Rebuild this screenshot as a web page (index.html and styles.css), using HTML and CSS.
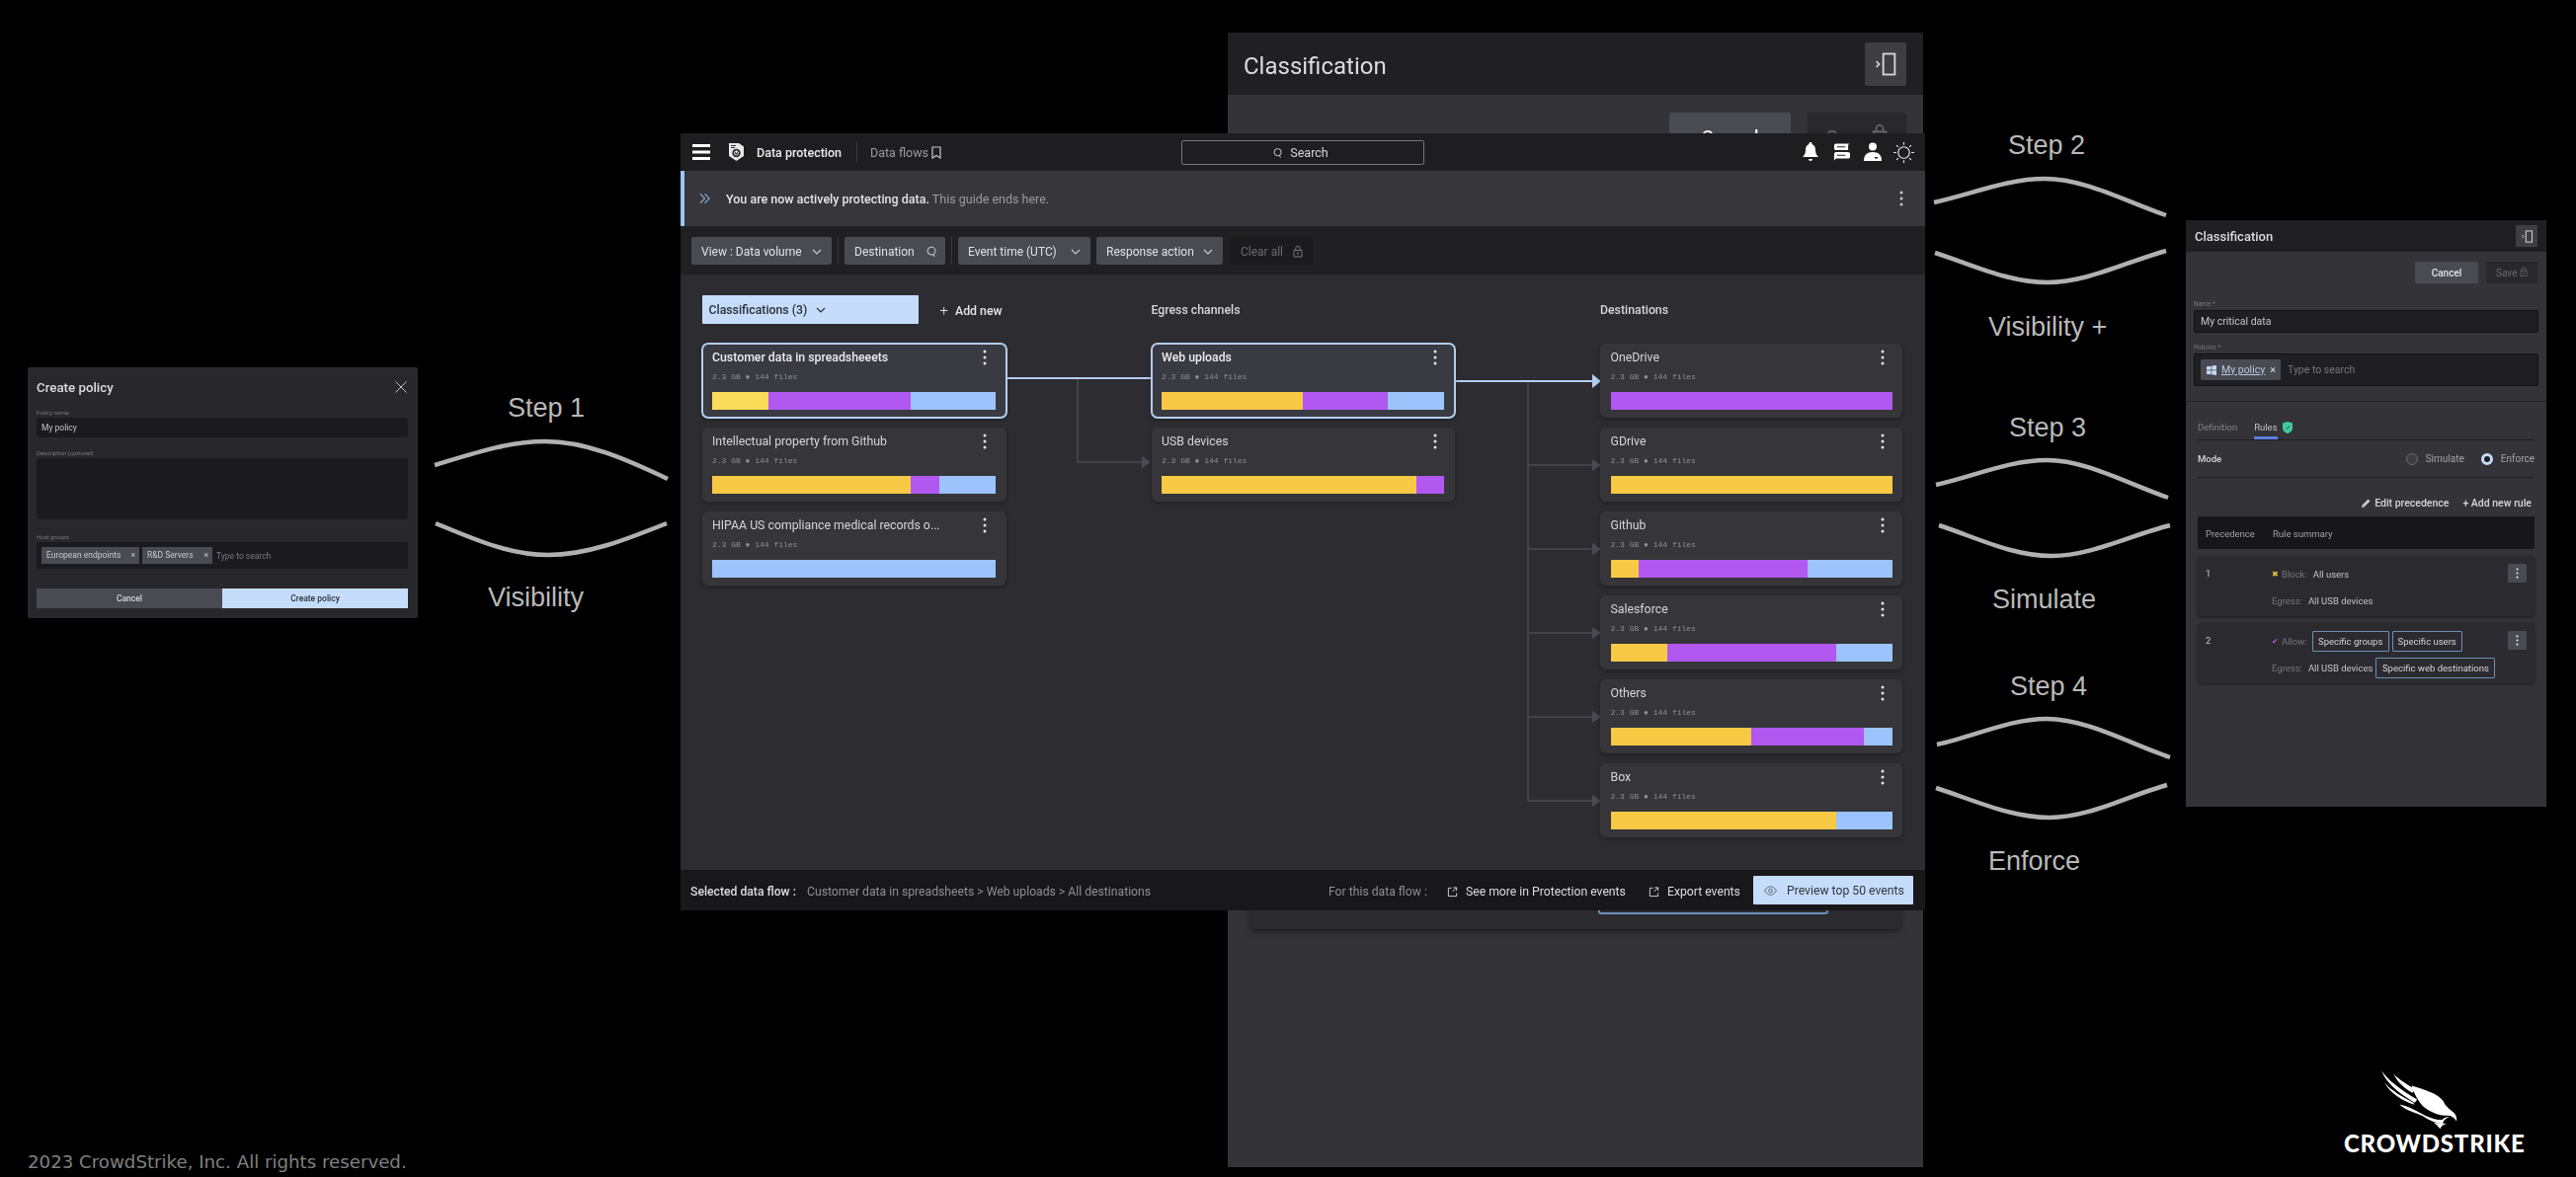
FILE: index.html
```html
<!DOCTYPE html>
<html lang="en">
<head>
<meta charset="utf-8">
<title>CrowdStrike data protection flow</title>
<link rel="stylesheet" href="styles.css">
</head>
<body>
<svg class="defs" width="0" height="0" aria-hidden="true">
  <symbol id="kebab" viewBox="0 0 4 16"><circle cx="2" cy="2" r="1.5"/><circle cx="2" cy="8" r="1.5"/><circle cx="2" cy="14" r="1.5"/></symbol>
  <symbol id="chev" viewBox="0 0 10 6"><path d="M1 1l4 4 4-4" fill="none" stroke="currentColor" stroke-width="1.2"/></symbol>
  <symbol id="lock" viewBox="0 0 10 12"><path d="M1 5h8v6.5H1zM2.8 5V3a2.2 2.2 0 0 1 4.4 0v2" fill="none" stroke="currentColor" stroke-width="1"/><circle cx="5" cy="8" r="1" fill="currentColor"/></symbol>
  <symbol id="collapse" viewBox="0 0 24 24"><rect x="10" y="3" width="10" height="18" fill="none" stroke="currentColor" stroke-width="1.6"/><path d="M4 9.500l2.500 2.500L4 14.500" fill="none" stroke="currentColor" stroke-width="1.400"/></symbol>
  <symbol id="ext" viewBox="0 0 12 12"><path d="M5 2H1.500v9h9V7.500M7 1.500h3.500V5M10.500 1.500L6 6" fill="none" stroke="currentColor" stroke-width="1"/></symbol>
  <symbol id="glass" viewBox="0 0 12 13"><circle cx="5.500" cy="5.500" r="4.300" fill="none" stroke="currentColor" stroke-width="1.100"/><path d="M7.500 9.500l1.500 2.500" stroke="currentColor" stroke-width="1.100"/></symbol>
</svg>

<main class="canvas">
  <svg class="waves" viewBox="0 0 2608 1192" aria-hidden="true">
    <path d="M440 471C480 459 515 447 552 447C592 447 632 464 676 485"/>
    <path d="M441 530C480 546 515 562 555 562C595 562 635 546 675 530"/>
    <path d="M1958 205C1995 197 2032 181 2070 181C2110 181 2150 203 2193 218"/>
    <path d="M1959 256C1997 268 2033 286 2073 286C2113 286 2153 265 2193 254"/>
    <path d="M1960 491C1997 483 2034 466 2072 466C2112 466 2152 489 2195 504"/>
    <path d="M1963 532C2000 544 2037 563 2077 563C2117 563 2157 542 2197 532"/>
    <path d="M1961 754C1998 746 2035 728 2072 728C2112 728 2154 752 2197 767"/>
    <path d="M1960 798C1998 810 2035 828 2075 828C2115 828 2154 806 2194 795"/>
  </svg>
  <div class="lbl lbl-s1">Step 1</div>
  <div class="lbl lbl-v1">Visibility</div>
  <div class="lbl lbl-s2">Step 2</div>
  <div class="lbl lbl-v2">Visibility +</div>
  <div class="lbl lbl-s3">Step 3</div>
  <div class="lbl lbl-sim">Simulate</div>
  <div class="lbl lbl-s4">Step 4</div>
  <div class="lbl lbl-enf">Enforce</div>

  <section class="dialog">
    <div class="dialog-head"><h2>Create policy</h2>
      <svg class="dialog-x" viewBox="0 0 12 12"><path d="M.5.500l11 11M11.500.500l-11 11" stroke="currentColor" fill="none"/></svg></div>
    <label class="d-label">Policy name</label>
    <div class="d-input d-name">My policy</div>
    <label class="d-label d-gap">Description (optional)</label>
    <div class="d-input d-area"></div>
    <label class="d-label d-gap2">Host groups</label>
    <div class="d-input d-hosts">
      <span class="d-chip d-chip-a">European endpoints <i>×</i></span>
      <span class="d-chip d-chip-b">R&amp;D Servers <i>×</i></span>
      <span class="d-ph">Type to search</span>
    </div>
    <div class="d-actions"><span class="d-btn d-cancel">Cancel</span><span class="d-btn d-create">Create policy</span></div>
  </section>

  <section class="back">
    <header class="back-head"><h2>Classification</h2><span class="back-collapse"><svg><use href="#collapse"/></svg></span></header>
    <div class="back-actions"><span class="back-cancel">Cancel</span><span class="back-save">Save <svg><use href="#lock"/></svg></span></div>
    <div class="back-card"><span class="back-tag"></span></div>
  </section>

  <section class="app">
    <header class="topbar">
      <div class="top-left">
        <svg class="burger" viewBox="0 0 18 16"><path d="M0 1.500h18M0 8h18M0 14.500h18" stroke="#fff" stroke-width="3"/></svg>
        <svg class="shield" viewBox="0 0 17 20"><path d="M1 1h10l5 3.500V14l-7.500 5L1 14z" fill="#e8e8ea"/><path d="M3 3.500h5M3 5.500h4" stroke="#333" stroke-width="1"/><circle cx="8.500" cy="11" r="4.200" fill="#2a2a2e"/><circle cx="8.500" cy="11" r="2" fill="none" stroke="#e8e8ea"/><path d="M8.500 8.500v2.500" stroke="#e8e8ea"/></svg>
        <span class="app-name">Data protection</span>
        <span class="top-sep"></span>
        <span class="crumb">Data flows</span>
        <svg class="bookmark" viewBox="0 0 10 13"><path d="M1 1h8v11L5 9.500 1 12z" fill="none" stroke="#c8c8cc" stroke-width="1.200"/></svg>
      </div>
      <div class="search"><svg><use href="#glass"/></svg>Search</div>
      <div class="top-right">
        <svg class="ti ti-bell" viewBox="0 0 16 20"><path d="M8 0a1.500 1.500 0 0 1 1.500 2C12 3 13 5 13 8c0 3 1 5 3 7H0c2-2 3-4 3-7 0-3 1-5 3.500-6A1.500 1.500 0 0 1 8 0z" fill="#fff"/><path d="M6 17h4a2 2 0 0 1-4 0z" fill="#fff"/></svg>
        <svg class="ti ti-chat" viewBox="0 0 18 20"><path d="M3 1h14l-1 1.500V8H3a2 2 0 0 1-2-2V3a2 2 0 0 1 2-2zM3 10h13a2 2 0 0 1 2 2v3a2 2 0 0 1-2 2H3l-2 2V12a2 2 0 0 1 2-2z" fill="#fff"/><path d="M4 4.500h9M4 13.500h9" stroke="#1e1e20" stroke-width="1.200"/></svg>
        <svg class="ti ti-user" viewBox="0 0 18 20"><circle cx="9" cy="4.500" r="4" fill="#fff"/><path d="M0 19c0-5 2-9 9-9s9 4 9 9z" fill="#fff"/><rect x="11" y="15" width="3" height="1.500" fill="#1e1e20"/></svg>
        <svg class="ti ti-sun" viewBox="0 0 22 22"><circle cx="11" cy="11" r="6" fill="none" stroke="#e8e8ea" stroke-width="1.200"/><path d="M11 0v3M11 19v3M0 11h3M19 11h3M3.200 3.200l2 2M16.800 16.800l2 2M3.200 18.800l2-2M16.800 5.200l2-2" stroke="#e8e8ea" stroke-width="1.200"/></svg>
      </div>
    </header>

    <div class="banner">
      <svg class="guide" viewBox="0 0 12 12"><path d="M1 1l5 5-5 5M6 1l5 5-5 5" fill="none" stroke="#9cc3fb" stroke-width="1.100"/></svg>
      <span class="banner-text"><b>You are now actively protecting data.</b> This guide ends here.</span>
      <svg class="kebab banner-kebab"><use href="#kebab"/></svg>
    </div>

    <div class="filters">
      <span class="fbtn f-view">View : Data volume <svg class="chev"><use href="#chev"/></svg></span>
      <span class="fsep"></span>
      <span class="fbtn f-dest">Destination <svg class="glass"><use href="#glass"/></svg></span>
      <span class="fsep"></span>
      <span class="fbtn f-time">Event time (UTC) <svg class="chev"><use href="#chev"/></svg></span>
      <span class="fbtn f-resp">Response action <svg class="chev"><use href="#chev"/></svg></span>
      <span class="fbtn f-clear">Clear all <svg class="lock"><use href="#lock"/></svg></span>
    </div>

    <div class="graph">
      <svg class="wires" viewBox="689 278 1260 603" aria-hidden="true">
        <path class="w-dim" d="M1091 383V468H1156M1547 386V811M1547 471H1612M1547 556H1612M1547 641H1612M1547 726H1612M1547 811H1612"/>
        <path class="a-dim" d="M1156 462l9 6-9 6zM1612 465l9 6-9 6zM1612 550l9 6-9 6zM1612 635l9 6-9 6zM1612 720l9 6-9 6zM1612 805l9 6-9 6z"/>
        <path class="w-on" d="M1018 383H1165M1473 386H1612"/>
        <path class="a-on" d="M1612 379l9 7-9 7z"/>
      </svg>
      <div class="col col-a">
        <div class="col-head"><span class="class-btn">Classifications (3) <svg class="chev"><use href="#chev"/></svg></span><span class="add-new"><i>+</i> Add new</span></div>
        <article class="card sel">
          <div class="card-top"><h3>Customer data in spreadsheeets</h3><svg class="kebab"><use href="#kebab"/></svg></div>
          <p class="meta">2.3 GB ● 144 files</p>
          <div class="bar"><span class="seg y y-light" style="width:20%"></span><span class="seg p" style="width:50%"></span><span class="seg b" style="width:30%"></span></div>
        </article>
        <article class="card">
          <div class="card-top"><h3>Intellectual property from Github</h3><svg class="kebab"><use href="#kebab"/></svg></div>
          <p class="meta">2.3 GB ● 144 files</p>
          <div class="bar"><span class="seg y" style="width:70%"></span><span class="seg p" style="width:10%"></span><span class="seg b" style="width:20%"></span></div>
        </article>
        <article class="card">
          <div class="card-top"><h3>HIPAA US compliance medical records o...</h3><svg class="kebab"><use href="#kebab"/></svg></div>
          <p class="meta">2.3 GB ● 144 files</p>
          <div class="bar"><span class="seg b" style="width:100%"></span></div>
        </article>
      </div>
      <div class="col col-b">
        <div class="col-head"><span class="col-title">Egress channels</span></div>
        <article class="card sel">
          <div class="card-top"><h3>Web uploads</h3><svg class="kebab"><use href="#kebab"/></svg></div>
          <p class="meta">2.3 GB ● 144 files</p>
          <div class="bar"><span class="seg y" style="width:50%"></span><span class="seg p" style="width:30%"></span><span class="seg b" style="width:20%"></span></div>
        </article>
        <article class="card">
          <div class="card-top"><h3>USB devices</h3><svg class="kebab"><use href="#kebab"/></svg></div>
          <p class="meta">2.3 GB ● 144 files</p>
          <div class="bar"><span class="seg y" style="width:90%"></span><span class="seg p" style="width:10%"></span></div>
        </article>
      </div>
      <div class="col col-c">
        <div class="col-head"><span class="col-title">Destinations</span></div>
        <article class="card">
          <div class="card-top"><h3>OneDrive</h3><svg class="kebab"><use href="#kebab"/></svg></div>
          <p class="meta">2.3 GB ● 144 files</p>
          <div class="bar"><span class="seg p" style="width:100%"></span></div>
        </article>
        <article class="card">
          <div class="card-top"><h3>GDrive</h3><svg class="kebab"><use href="#kebab"/></svg></div>
          <p class="meta">2.3 GB ● 144 files</p>
          <div class="bar"><span class="seg y" style="width:100%"></span></div>
        </article>
        <article class="card">
          <div class="card-top"><h3>Github</h3><svg class="kebab"><use href="#kebab"/></svg></div>
          <p class="meta">2.3 GB ● 144 files</p>
          <div class="bar"><span class="seg y" style="width:10%"></span><span class="seg p" style="width:60%"></span><span class="seg b" style="width:30%"></span></div>
        </article>
        <article class="card">
          <div class="card-top"><h3>Salesforce</h3><svg class="kebab"><use href="#kebab"/></svg></div>
          <p class="meta">2.3 GB ● 144 files</p>
          <div class="bar"><span class="seg y" style="width:20%"></span><span class="seg p" style="width:60%"></span><span class="seg b" style="width:20%"></span></div>
        </article>
        <article class="card">
          <div class="card-top"><h3>Others</h3><svg class="kebab"><use href="#kebab"/></svg></div>
          <p class="meta">2.3 GB ● 144 files</p>
          <div class="bar"><span class="seg y" style="width:50%"></span><span class="seg p" style="width:40%"></span><span class="seg b" style="width:10%"></span></div>
        </article>
        <article class="card">
          <div class="card-top"><h3>Box</h3><svg class="kebab"><use href="#kebab"/></svg></div>
          <p class="meta">2.3 GB ● 144 files</p>
          <div class="bar"><span class="seg y" style="width:80%"></span><span class="seg b" style="width:20%"></span></div>
        </article>
      </div>
    </div>

    <footer class="foot">
      <b class="foot-sel">Selected data flow :</b>
      <span class="foot-path">Customer data in spreadsheets &gt; Web uploads &gt; All destinations</span>
      <span class="foot-for">For this data flow :</span>
      <span class="foot-link l-more"><svg><use href="#ext"/></svg>See more in Protection events</span>
      <span class="foot-link l-export"><svg><use href="#ext"/></svg>Export events</span>
      <span class="preview"><svg viewBox="0 0 14 10"><path d="M.5 5C3 1.500 5 .500 7 .500s4 1 6.500 4.500C11 8.500 9 9.500 7 9.500S3 8.500.5 5z" fill="none" stroke="#55606e"/><circle cx="7" cy="5" r="2" fill="none" stroke="#55606e"/></svg>Preview top 50 events</span>
    </footer>
  </section>

  <section class="rail">
    <header class="rail-head"><h2>Classification</h2><span class="rail-collapse"><svg><use href="#collapse"/></svg></span></header>
    <div class="rail-actions"><span class="r-cancel">Cancel</span><span class="r-save">Save <svg><use href="#lock"/></svg></span></div>
    <div class="rail-form">
      <label class="r-label r-label-a">Name *</label>
      <div class="r-input r-name">My critical data</div>
      <label class="r-label r-label-b">Policies *</label>
      <div class="r-input r-policies">
        <span class="r-chip"><svg viewBox="0 0 11 11"><path d="M0 1.500l5-.800v4.300H0zM5.800.600L11 0v5H5.800zM0 5.800h5v4.400l-5-.700zM5.800 5.800H11V11l-5.200-.700z" fill="#c5dcfb"/></svg><u>My policy</u><i>×</i></span>
        <span class="r-ph">Type to search</span>
      </div>
    </div>
    <div class="rail-body">
      <nav class="tabs"><span class="tab">Definition</span><span class="tab tab-on">Rules</span>
        <svg class="tab-shield" viewBox="0 0 10 12"><path d="M0 1.500L5 0l5 1.500V7c0 2.500-2.500 4-5 5-2.500-1-5-2.500-5-5z" fill="#41c99a"/><path d="M3 6l1.500 1.500L7 4.500" stroke="#1f6b52" fill="none"/></svg></nav>
      <div class="mode"><b>Mode</b>
        <span class="radio"></span><span class="mode-opt m-sim">Simulate</span>
        <span class="radio radio-on"></span><span class="mode-opt">Enforce</span></div>
      <div class="rule-tools">
        <span class="tool"><svg viewBox="0 0 9 9"><path d="M0 9l.600-2.500L6.500.500l2 2-6 6z" fill="#c8c8cc"/></svg>Edit precedence</span>
        <span class="tool tool-add">+ Add new rule</span>
      </div>
      <div class="r-thead"><span class="th-a">Precedence</span><span>Rule summary</span></div>
      <article class="rule">
        <span class="rule-n">1</span>
        <div class="rule-lines">
          <div class="rule-line"><span class="mark mark-x">✖</span><span class="dim">Block:</span><span>All users</span></div>
          <div class="rule-line rule-line2"><span class="dim">Egress:</span><span>All USB devices</span></div>
        </div>
        <span class="rule-menu"><svg class="kebab"><use href="#kebab"/></svg></span>
      </article>
      <article class="rule">
        <span class="rule-n">2</span>
        <div class="rule-lines">
          <div class="rule-line"><span class="mark mark-ok">✔</span><span class="dim">Allow:</span><span class="tag tag-g">Specific groups</span><span class="tag tag-u">Specific users</span></div>
          <div class="rule-line rule-line2"><span class="dim">Egress:</span><span>All USB devices</span><span class="tag tag-w">Specific web destinations</span></div>
        </div>
        <span class="rule-menu"><svg class="kebab"><use href="#kebab"/></svg></span>
      </article>
    </div>
  </section>

  <p class="copy">2023 CrowdStrike, Inc. All rights reserved.</p>

  <div class="brand">
    <svg class="bird" viewBox="205 35 245 190" aria-hidden="true">
      <path d="M213 42C232 70 270 100 322 130C318 136 316 138 314 140C280 118 232 90 213 42Z"/>
      <path d="M250 52C270 72 300 88 318 100C312 104 310 106 308 110C285 96 262 78 250 52Z"/>
      <path d="M222 78C245 105 278 122 310 140L314 146C278 134 240 112 222 78Z"/>
      <path d="M305 88C345 100 385 112 402 135C408 150 422 160 436 172C442 180 444 188 442 196C436 184 424 178 410 179C392 180 368 172 346 156C326 140 314 114 305 88Z"/>
      <path d="M268 145C295 150 320 165 345 178C365 188 380 192 398 192C404 186 412 182 420 184C406 188 402 196 400 204C385 204 360 196 338 180C318 170 290 165 268 145Z"/>
      <path d="M372 200C382 202 398 202 412 204C402 206 396 210 392 220C388 214 380 206 372 200Z"/>
    </svg>
    <span class="brand-name">CROWDSTRIKE</span>
  </div>
</main>
</body>
</html>
```

FILE: styles.css
```css
* { box-sizing: border-box; }
html, body { margin: 0; padding: 0; background: #000; }
body { font-family: Roboto, "Liberation Sans", sans-serif; color: #e4e4e7; }
h2, h3, p { margin: 0; font-weight: 400; }
i { font-style: normal; }
.defs { position: absolute; }

.canvas { position: relative; width: 2608px; height: 1192px; overflow: hidden; background: #000; }

/* connectors and step captions */
.waves { position: absolute; left: 0; top: 0; width: 2608px; height: 1192px; }
.waves path { fill: none; stroke: #b0b0b0; stroke-width: 4.5; }
.lbl { position: absolute; font: 27px/32px "Liberation Sans", Arial, sans-serif; color: #b9b9b9; white-space: nowrap; }
.lbl-s1 { left: 514px; top: 397px; }
.lbl-v1 { left: 494px; top: 589px; }
.lbl-s2 { left: 2033px; top: 131px; }
.lbl-v2 { left: 2013px; top: 315px; }
.lbl-s3 { left: 2034px; top: 417px; }
.lbl-sim { left: 2017px; top: 591px; }
.lbl-s4 { left: 2035px; top: 679px; }
.lbl-enf { left: 2013px; top: 856px; }

/* step 1 dialog */
.dialog { position: absolute; left: 28px; top: 372px; width: 395px; height: 254px; padding: 0 10px 0 9px; background: #28282c; border-radius: 2px; display: flex; flex-direction: column; filter: blur(.5px); }
.dialog-head { display: flex; align-items: center; justify-content: space-between; height: 38px; padding-top: 2px; padding-right: 1px; }
.dialog-head h2 { font-size: 13.300px; font-weight: 500; color: #dcdce0; }
.dialog-x { width: 12px; height: 12px; color: #c4c4c8; }
.d-label { display: block; height: 9px; margin-top: 3px; font-size: 6px; line-height: 9px; color: #77777c; }
.d-input { background: #1b1b1f; border-radius: 2px; font-size: 8.500px; color: #c4c4c8; }
.d-name { height: 20px; margin-top: 1px; padding-left: 5px; line-height: 21px; }
.d-gap { margin-top: 11px; }
.d-area { height: 62px; margin-top: 1px; }
.d-gap2 { margin-top: 13px; }
.d-hosts { height: 27px; margin-top: 1px; padding-left: 5px; display: flex; align-items: center; }
.d-chip { height: 17px; padding-left: 5px; background: #4a4a53; color: #c9c9ce; line-height: 17px; display: flex; justify-content: space-between; padding-right: 4px; }
.d-chip-a { width: 99px; margin-right: 3px; }
.d-chip-b { width: 71px; margin-right: 4px; }
.d-ph { color: #77777c; }
.d-actions { display: flex; margin-top: 20px; }
.d-btn { width: 50%; height: 20px; text-align: center; font-size: 8.500px; font-weight: 500; line-height: 20px; }
.d-cancel { background: #4a4a53; color: #d6d6da; }
.d-create { background: #c5dcfb; color: #2a2f3a; }

/* classification panel behind the app */
.back { position: absolute; left: 1243px; top: 33px; width: 704px; height: 1149px; background: #343438; filter: blur(.3px); }
.back-head { display: flex; align-items: center; justify-content: space-between; height: 63px; padding: 0 17px 0 16px; background: #202022; }
.back-head h2 { padding-top: 4px; font-size: 24px; color: #dcdce0; }
.back-collapse { width: 42px; height: 44px; display: flex; align-items: center; justify-content: center; background: #3e3e43; border-radius: 2px; color: #d6d6da; }
.back-collapse svg { width: 28px; height: 28px; }
.back-actions { display: flex; justify-content: flex-end; gap: 17px; padding: 18px 17px 0 0; font-size: 19px; }
.back-cancel { width: 123px; height: 50px; background: #4a4a53; border-radius: 2px; text-align: center; line-height: 50px; color: #f0f0f2; font-weight: 500; }
.back-save { width: 100px; height: 50px; background: #29292d; border-radius: 2px; text-align: center; line-height: 50px; color: #6a6a70; }
.back-save svg { width: 16px; height: 20px; }
.back-card { width: 658px; height: 129px; margin: 648px 0 0 23px; background: #2b2b2f; border-radius: 4px; box-shadow: 0 2px 6px rgba(0,0,0,.5); position: relative; padding: 68px 0 0 352px; }
.back-tag { display: block; width: 233px; height: 46px; border: 2px solid #6f8db8; border-radius: 3px; }

/* main app window */
.app { position: absolute; left: 689px; top: 135px; width: 1260px; height: 787px; display: flex; flex-direction: column; background: #2d2d31; filter: blur(.3px); }
.topbar { display: grid; grid-template-columns: 507px 246px 1fr; align-items: center; height: 38px; background: #1e1e20; flex: none; }
.top-left { display: flex; align-items: center; padding-left: 12px; }
.burger { width: 18px; height: 16px; }
.shield { width: 17px; height: 20px; margin-left: 18px; }
.app-name { margin-left: 12px; width: 101px; padding-top: 1px; font-size: 12.500px; font-weight: 500; color: #ececee; }
.top-sep { width: 1px; height: 20px; background: #3c3c40; }
.crumb { margin-left: 13px; width: 62px; padding-top: 1px; font-size: 12.500px; color: #9a9a9f; }
.bookmark { width: 10px; height: 13px; }
.search { height: 25px; display: flex; align-items: center; justify-content: center; gap: 7px; padding: 1px 4px 0 0; border: 1px solid #77777c; border-radius: 2px; font-size: 12.500px; color: #d6d6da; }
.search svg { width: 10px; height: 12px; }
.top-right { display: flex; align-items: center; justify-content: flex-end; padding-right: 11px; }
.ti { height: 20px; }
.ti-bell { width: 16px; margin-right: 15px; }
.ti-chat { width: 17px; margin-right: 14px; }
.ti-user { width: 18px; margin-right: 12px; }
.ti-sun { width: 21px; height: 21px; }

.banner { height: 56px; display: flex; align-items: center; padding: 0 22px 0 15px; background: #37373b; border-left: 4px solid #9cc3fb; flex: none; }
.guide { width: 11px; height: 12px; }
.banner-text { margin-left: 16px; padding-top: 1px; font-size: 12.500px; color: #9a9a9f; }
.banner-text b { font-weight: 500; color: #e4e4e7; }
.kebab { width: 4px; height: 16px; fill: #e4e4e7; flex: none; }
.banner-kebab { margin-left: auto; fill: #c8c8cc; }

.filters { height: 49px; display: flex; align-items: center; gap: 6px; padding: 1px 0 0 11px; background: #202022; flex: none; }
.fbtn { height: 28px; display: flex; align-items: center; justify-content: space-between; padding: 1px 10px 0; background: #4a4a53; border-radius: 2px; font-size: 12px; color: #e0e0e4; white-space: nowrap; }
.fsep { width: 1px; height: 28px; background: #38383c; }
.f-view { width: 142px; }
.f-dest { width: 102px; padding-right: 8px; }
.f-time { width: 134px; }
.f-resp { width: 128px; }
.f-clear { width: 83px; margin-left: 2px; background: #1b1b1d; color: #6a6a70; }
.chev { width: 10px; height: 6px; color: #c8c8cc; flex: none; }
.glass { width: 11px; height: 14px; color: #c8c8cc; }
.lock { width: 10px; height: 13px; color: #77777c; }

.graph { flex: 1; position: relative; display: grid; grid-template-columns: 308px 307.500px 306px; column-gap: 147px; justify-content: start; padding: 21px 0 0 21.500px; align-content: start; }
.wires { position: absolute; left: 0; top: 0; width: 1260px; height: 603px; }
.wires path { fill: none; }
.w-dim { stroke: #4a4a52; stroke-width: 1.500; }
.wires .a-dim { fill: #4a4a52; }
.w-on { stroke: #b4cdf0; stroke-width: 2; }
.wires .a-on { fill: #b4cdf0; }

.col { position: relative; display: flex; flex-direction: column; gap: 10px; }
.col-head { height: 29px; margin-bottom: 10px; display: flex; align-items: center; font-size: 12.300px; font-weight: 500; color: #d6d6da; }
.class-btn { width: 219px; height: 29px; display: flex; align-items: center; gap: 9px; padding-left: 7px; background: #c5dcfb; border-radius: 1px; color: #2a2f3a; font-weight: 500; }
.class-btn .chev { color: #2a2f3a; }
.add-new { margin-left: 22px; color: #e4e4e7; }
.add-new i { margin-right: 4px; font-weight: 300; font-size: 15px; }
.col-title { display: block; }

.card { height: 75px; padding: 0 10.500px; background: #35353a; border-radius: 6px; box-shadow: 0 2px 5px rgba(0,0,0,.28); display: flex; flex-direction: column; }
.card.sel { background: #3a3a42; outline: 2px solid #b4cdf0; outline-offset: -1px; }
.card-top { display: flex; justify-content: space-between; align-items: center; height: 28px; padding-right: 8px; }
.col-a .card-top { padding-right: 9.500px; }
.card-top h3 { font-size: 12.300px; color: #d6d6da; white-space: nowrap; }
.card.sel h3 { font-weight: 500; color: #ececee; }
.meta { height: 21px; font: 8px/11px "Liberation Mono", monospace; color: #909096; }
.bar { display: flex; height: 18px; }
.seg { display: block; height: 100%; }
.y { background: #f7c945; }
.y-light { background: #fadb5a; }
.p { background: #b158f0; }
.b { background: #9cc3fb; }

.foot { height: 41px; display: flex; align-items: center; padding: 2px 0 0 10px; background: #18181b; font-size: 12.200px; color: #8e8e94; flex: none; }
.foot-sel { width: 118px; font-weight: 500; color: #dcdce0; }
.foot-path { width: 528px; }
.foot-for { width: 120px; }
.foot-link { display: flex; align-items: center; gap: 8px; color: #dcdce0; }
.foot-link svg { width: 11px; height: 12px; }
.l-more { width: 204px; }
.l-export { width: 106px; }
.preview { width: 162px; height: 29px; margin-top: -2px; display: flex; align-items: center; gap: 10px; padding-left: 11px; background: #c5dcfb; border-radius: 1px; color: #2f3540; }
.preview svg { width: 13px; height: 10px; }

/* step 2-4 rail */
.rail { position: absolute; left: 2213px; top: 223px; width: 365px; height: 594px; background: #343438; display: flex; flex-direction: column; filter: blur(.5px); }
.rail-head { height: 32px; display: flex; align-items: center; justify-content: space-between; padding: 0 9px; background: #202022; flex: none; }
.rail-head h2 { font-size: 13px; font-weight: 500; color: #dcdce0; }
.rail-collapse { width: 22px; height: 22px; display: flex; align-items: center; justify-content: center; background: #3e3e43; color: #d6d6da; }
.rail-collapse svg { width: 15px; height: 15px; }
.rail-actions { display: flex; justify-content: flex-end; gap: 8px; padding: 10px 9px 0 0; font-size: 10px; }
.r-cancel { width: 64px; height: 22px; background: #4a4a53; border-radius: 2px; text-align: center; line-height: 23px; font-weight: 500; color: #e4e4e7; }
.r-save { width: 52px; height: 22px; background: #29292d; border-radius: 2px; text-align: center; line-height: 23px; color: #6a6a70; }
.r-save svg { width: 8px; height: 10px; }
.rail-form { padding: 0 8px 15px; border-bottom: 1px solid #222225; }
.r-label { display: block; height: 8px; font-size: 6.500px; line-height: 8px; color: #77777c; }
.r-label-a { margin-top: 17px; }
.r-label-b { margin-top: 11px; }
.r-input { margin-top: 2px; background: #1f1f22; border: 1px solid #111; border-radius: 2px; font-size: 10.500px; color: #c4c4c8; }
.r-name { height: 23px; padding-left: 6px; line-height: 22px; }
.r-policies { height: 33px; padding-left: 6px; display: flex; align-items: center; }
.r-chip { width: 81px; height: 21px; display: flex; align-items: center; padding-left: 6px; background: #4a4a53; border-radius: 1px; color: #b8c8e0; }
.r-chip svg { width: 10px; height: 10px; margin-right: 5px; flex: none; }
.r-chip i { margin-left: auto; margin-right: 5px; color: #dcdce0; font-size: 11px; }
.r-ph { margin-left: 7px; color: #77777c; }

.rail-body { padding: 0 12px; font-size: 9.500px; color: #c4c4c8; }
.tabs { height: 39px; display: flex; align-items: flex-end; border-bottom: 1px solid #1e1e20; }
.tab { height: 19px; padding-top: 1px; line-height: 12px; color: #808086; }
.tab-on { margin-left: 17px; color: #c4c4c8; box-shadow: inset 0 -3px 0 #5b7fe0; }
.tab-shield { width: 10px; height: 12px; margin: 0 0 6px 5px; }
.mode { height: 38px; display: flex; align-items: center; border-bottom: 1px solid #222225; }
.mode b { margin-right: auto; font-weight: 500; color: #d6d6da; }
.radio { width: 12px; height: 12px; border-radius: 50%; background: #3c3c41; border: 1px solid #6a6a70; }
.radio-on { background: #1f1f22; border: 3px solid #c5dcfb; box-shadow: inset 0 0 0 1px #1f1f22; }
.mode-opt { margin-left: 8px; font-size: 10px; color: #a2a2a8; }
.m-sim { margin-right: 17px; }
.rule-tools { height: 39px; display: flex; justify-content: flex-end; align-items: flex-end; gap: 14px; padding: 0 3px 7px 0; font-size: 10.500px; font-weight: 500; color: #d6d6da; }
.tool { display: flex; align-items: center; }
.tool svg { width: 9px; height: 9px; margin-right: 4px; }
.r-thead { height: 33px; display: flex; align-items: center; padding: 2px 0 0 8px; background: #17171b; color: #a2a2a8; margin-bottom: 7px; }
.th-a { width: 68px; }
.rule { height: 61px; margin-bottom: 7px; display: flex; padding: 7px 8px 0; background: #2b2b2f; border-radius: 3px; box-shadow: 0 1px 3px rgba(0,0,0,.5); }
.rule-n { width: 67px; line-height: 22px; }
.rule-lines { flex: 1; }
.rule-line { height: 22px; display: flex; align-items: center; gap: 6px; white-space: nowrap; }
.rule-line2 { margin-top: 5px; }
.dim { color: #77777c; }
.mark { width: 5px; margin-right: -1px; font-size: 8px; }
.mark-x { color: #e8c440; }
.mark-ok { color: #b158f0; }
.tag { height: 21px; display: flex; align-items: center; justify-content: center; border: 1px solid #6f8db8; border-radius: 1px; color: #d6d6da; }
.tag-g { width: 78px; margin-left: -1px; margin-right: -3px; }
.tag-u { width: 71px; }
.tag-w { width: 121px; margin-left: -3px; }
.rule-menu { width: 19px; height: 19px; margin-top: 1px; display: flex; align-items: center; justify-content: center; background: #4a4a53; border-radius: 1px; }
.rule-menu .kebab { height: 11px; width: 3px; }

.copy { position: absolute; left: 28px; top: 1165px; font: 18.200px/24px "DejaVu Sans", sans-serif; color: #808080; white-space: nowrap; }

.brand { position: absolute; left: 2373px; top: 1082px; width: 187px; height: 86px; display: flex; flex-direction: column; align-items: flex-start; }
.bird { width: 82px; height: 63px; margin-left: 35px; fill: #fff; }
.brand-name { margin-top: 3px; font: 900 24px/20px Lato, "Liberation Sans", sans-serif; color: #fff; letter-spacing: .8px; white-space: nowrap; }
```
